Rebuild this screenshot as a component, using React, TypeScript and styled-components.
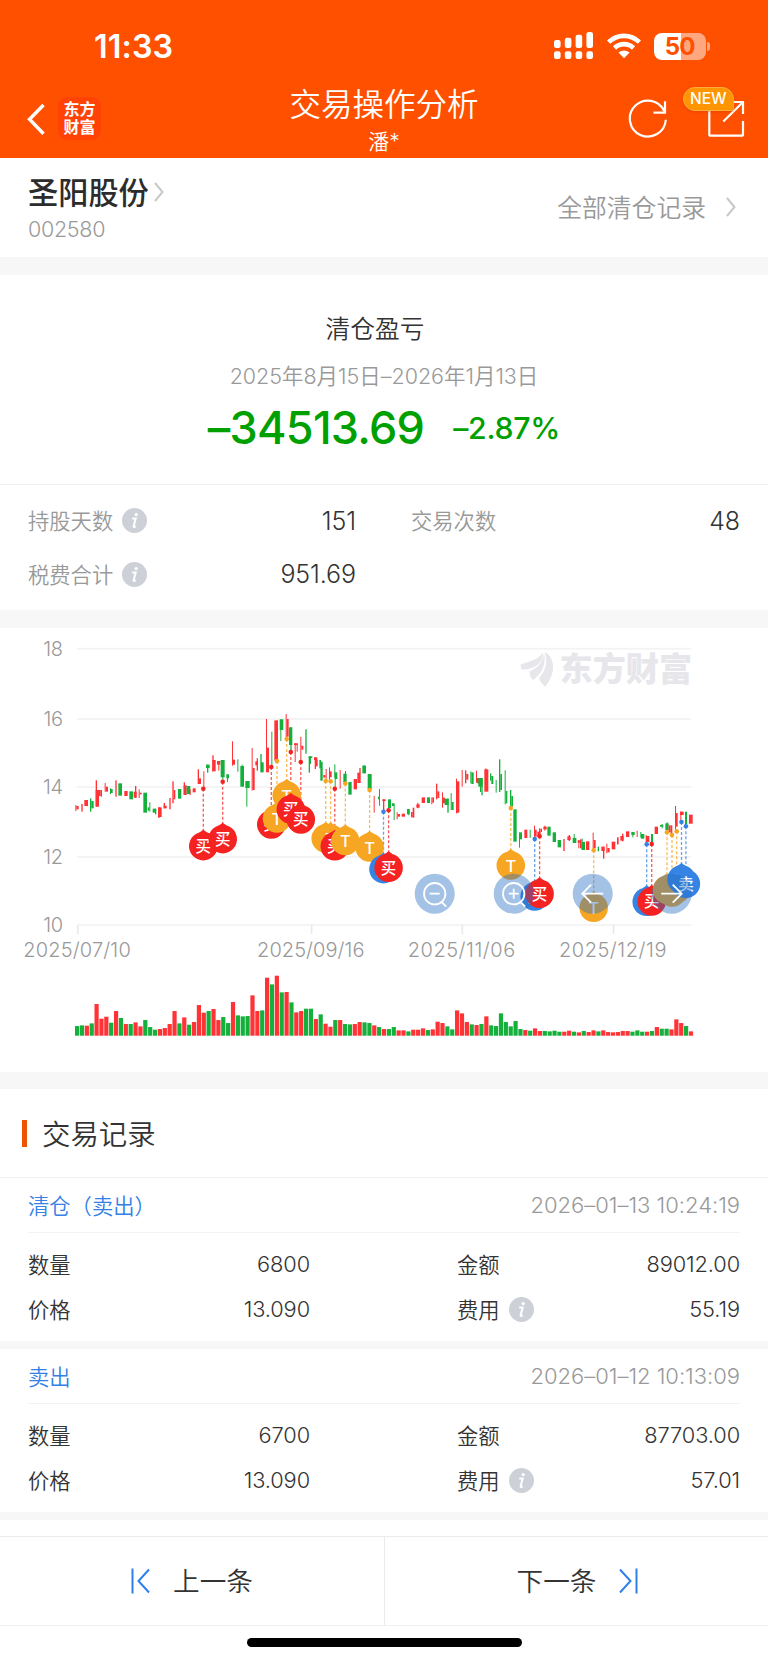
import React from "react";
import styled, { createGlobalStyle } from "styled-components";

const GlobalStyle = createGlobalStyle`
  * { box-sizing: border-box; }
  body {
    margin: 0;
    background: #fff;
    color: #333;
    font-family: Inter, "Noto Sans CJK SC", sans-serif;
    font-weight: 350;
  }
`;

const Page = styled.main`
  width: 768px;
  height: 1662px;
  display: flex;
  flex-direction: column;
  overflow: hidden;
  background: #fff;
`;

/* ---------- header ---------- */

const Header = styled.header`
  height: 158px;
  background: #ff5000;
  color: #fff;
  display: flex;
  flex-direction: column;
`;

const StatusBar = styled.div`
  height: 80px;
  padding: 12px 58px 0 94px;
  display: flex;
  align-items: center;
  justify-content: space-between;
`;

const Clock = styled.span`
  font-size: 32.3px;
  font-weight: 600;
  letter-spacing: 0.1px;
`;

const StatusIcons = styled.div`
  display: flex;
  align-items: center;
  gap: 13px;
`;

const Battery = styled.div`
  display: flex;
  align-items: center;
  gap: 1.5px;
`;

const BatteryCell = styled.div`
  width: 51.5px;
  height: 27px;
  border-radius: 8px;
  background: linear-gradient(90deg, #fff 51%, #ffa77f 51%);
  color: #ff5000;
  font-size: 24px;
  font-weight: 700;
  line-height: 27px;
  text-align: center;
  letter-spacing: -0.8px;
`;

const BatteryTip = styled.div`
  width: 3px;
  height: 9px;
  border-radius: 0 4px 4px 0;
  background: #ffa77f;
`;

const NavBar = styled.div`
  height: 78px;
  padding: 0 22px 0 27px;
  display: grid;
  grid-template-columns: 200px 1fr 205px;
`;

const NavLeft = styled.div`
  display: flex;
  align-items: flex-start;
  padding-top: 17px;
  gap: 13px;
`;

const AppBadge = styled.div`
  width: 43px;
  height: 43px;
  border-radius: 9px;
  background: #ff4206;
  font-size: 16px;
  font-weight: 700;
  line-height: 17.5px;
  padding-top: 4px;
  text-align: center;
`;

const NavTitle = styled.div`
  display: flex;
  flex-direction: column;
  align-items: center;
  white-space: nowrap;
  padding-top: 2.5px;
`;

const Title = styled.h1`
  margin: 0;
  font-size: 31.5px;
  font-weight: 350;
  line-height: 44px;
`;

const Subtitle = styled.span`
  font-size: 21px;
  line-height: 30px;
`;

const NavRight = styled.div`
  display: flex;
  justify-content: flex-end;
  align-items: flex-start;
  padding-top: 19px;
  gap: 40px;
`;

const ShareButton = styled.div`
  position: relative;
  height: 40px;
`;

const NewTag = styled.span`
  position: absolute;
  left: -24px;
  top: -12px;
  width: 50.5px;
  height: 23.5px;
  border: 1px solid #ffab3a;
  border-radius: 12px 12px 3px 12px;
  background: #ff9500;
  box-shadow: 0 1px 3px rgba(180, 50, 0, 0.3);
  font-size: 15.5px;
  font-weight: 500;
  line-height: 22px;
  text-align: center;
`;

/* ---------- shared ---------- */

const Gap = styled.div<{ $h: number }>`
  height: ${(p) => p.$h}px;
  flex: none;
  background: #f7f7f7;
`;

const Label = styled.span<{ $muted?: boolean }>`
  display: flex;
  align-items: center;
  gap: 9px;
  padding-bottom: 2px;
  font-size: 21.3px;
  color: ${(p) => (p.$muted ? "#999" : "#333")};

  svg {
    margin-top: 2px;
  }
`;

const Value = styled.span<{ $size?: number }>`
  font-size: ${(p) => p.$size ?? 21.8}px;
  letter-spacing: -0.1px;
  text-align: right;
  color: #333;
`;

/* ---------- stock ---------- */

const StockBar = styled.section`
  height: 99px;
  padding: 0 32px 0 28px;
  display: flex;
  justify-content: space-between;
`;

const StockName = styled.div`
  display: flex;
  align-items: center;
  gap: 5px;
  height: 44px;
  margin-top: 10.5px;
  font-size: 30.2px;
  font-weight: 500;
  color: #2c2c2c;

  svg {
    margin-top: 2px;
  }
`;

const StockCode = styled.div`
  margin-top: 1.5px;
  font-size: 21.5px;
  line-height: 30px;
  letter-spacing: -0.3px;
  color: #999;
`;

const AllRecords = styled.div`
  display: flex;
  align-items: center;
  gap: 20px;
  padding-bottom: 4px;
  font-size: 24.8px;
  color: #999;

  svg {
    margin-top: 3px;
  }
`;

/* ---------- summary ---------- */

const Summary = styled.section`
  height: 209px;
  display: flex;
  flex-direction: column;
  align-items: center;
  padding-top: 36px;
`;

const SummaryTitle = styled.div`
  margin-right: 18px;
  font-size: 24.7px;
  line-height: 36px;
`;

const Period = styled.div`
  margin-top: 13.5px;
  font-size: 21.5px;
  line-height: 30px;
  letter-spacing: -0.02px;
  color: #999;
`;

const Profit = styled.div`
  margin-top: 9px;
  height: 56px;
  display: flex;
  align-items: center;
  gap: 29px;
  color: #00a000;
  font-weight: 500;
`;

const Amount = styled.span`
  font-size: 45px;
  letter-spacing: -0.75px;
`;

const Percent = styled.span`
  font-size: 30.3px;
  letter-spacing: -0.3px;
`;

const Stats = styled.section`
  height: 126px;
  border-top: 1px solid #f1f1f1;
  padding: 9px 28px 0;
  display: grid;
  grid-template-columns: 328px 329px;
  grid-auto-rows: 53.5px;
  column-gap: 55px;
`;

const Stat = styled.div`
  display: flex;
  align-items: center;
  justify-content: space-between;
`;

const ChartPanel = styled.section`
  height: 443.5px;
  svg { display: block; }
`;

/* ---------- records ---------- */

const RecordsTitle = styled.h2`
  height: 89px;
  margin: 0;
  padding-left: 21.5px;
  padding-bottom: 2px;
  display: flex;
  align-items: center;
  gap: 15px;
  border-bottom: 1px solid #f3f3f3;
  font-size: 28.4px;
  font-weight: 350;

  &::before {
    content: "";
    width: 5.5px;
    height: 27px;
    margin-top: 2px;
    background: #eb5500;
  }
`;

const Record = styled.article`
  height: 162.5px;
  padding: 0 28px;
`;

const RecordHead = styled.div`
  height: 54.5px;
  border-bottom: 1px solid #f3f3f3;
  display: flex;
  align-items: center;
  justify-content: space-between;
`;

const RecordKind = styled.span`
  font-size: 21.3px;
  color: #3380e6;
`;

const RecordTime = styled.time`
  padding-top: 1px;
  font-size: 22px;
  letter-spacing: -0.02px;
  color: #999;
`;

const RecordGrid = styled.div`
  padding-top: 9px;
  display: grid;
  grid-template-columns: 282px 283px;
  grid-auto-rows: 45px;
  column-gap: 147px;
`;

/* ---------- footer ---------- */

const Pager = styled.nav`
  height: 90px;
  margin-top: 15.5px;
  border-top: 1px solid #ebebeb;
  border-bottom: 1px solid #f0f0f0;
  display: grid;
  grid-template-columns: 1fr 1fr;
`;

const PagerButton = styled.div`
  display: flex;
  align-items: center;
  justify-content: center;
  gap: 22px;
  padding-bottom: 2px;
  font-size: 26.6px;

  svg {
    margin-top: 2px;
  }

  & + & {
    border-left: 1px solid #ebebeb;
    padding-left: 2px;
  }
`;

const HomeBar = styled.div`
  width: 275px;
  height: 9px;
  margin: 12px auto 0;
  border-radius: 5px;
  background: #000;
`;

/* ---------- icons ---------- */

const Chevron = ({ w = 10, h = 20 }: { w?: number; h?: number }) => (
  <svg width={w} height={h} viewBox={`0 0 ${w} ${h}`} fill="none" stroke="#c8c8c8" strokeWidth="2">
    <path d={`M1 1L${w - 1.5} ${h / 2}L1 ${h - 1}`} />
  </svg>
);

const InfoIcon = () => (
  <svg width="25" height="25" viewBox="0 0 25 25">
    <circle cx="12.5" cy="12.5" r="12.5" fill="#cdd0d6" />
    <circle cx="14.2" cy="6.6" r="1.7" fill="#fff" />
    <path d="M10.2 10.6h3.5l-2.1 7.6q-.3 1.500 2.200 .1" fill="none" stroke="#fff" strokeWidth="2" />
  </svg>
);

const SignalIcon = () => (
  <svg width="40" height="28" viewBox="0 0 40 28" fill="#fff">
    {[8, 5.7, 2.7, 0].map((y, i) => (
      <g key={y}>
        <rect x={i * 10.8} y={y} width="6.6" height={16 - y} rx="2.2" />
        <rect x={i * 10.8} y="19.3" width="6.6" height="7.7" rx="2.2" />
      </g>
    ))}
  </svg>
);

const WifiIcon = () => (
  <svg width="34" height="26" viewBox="0 0 34 26" fill="none" stroke="#fff" strokeWidth="4.6">
    <path d="M1.6 9.2A22 22 0 0 1 32.4 9.2" />
    <path d="M7.5 15A13.6 13.6 0 0 1 26.5 15" />
    <path d="M11.4 19.6Q17 15.4 22.6 19.6L17 25.2Z" fill="#fff" stroke="none" />
  </svg>
);

/* ---------- chart ---------- */

const UP = "#ff3236";
const DOWN = "#15b03c";

// Candle segments: direction, left, top, right, bottom in thirds of a pixel
// relative to the origin of each run.
const runs: { ox: number; oy: number; data: string }[] = [
  {
    ox: 60,
    oy: 640,
    data: `R46,495,49,513 R49,498,56,508 R64,492,68,515 R73,480,84,498 G90,475,94,515 G94,483,101,505
R107,421,111,500 R107,450,117,500 R117,450,122,468 R122,450,126,470 R134,429,137,455 R137,440,144,455
G150,445,153,462 G153,447,158,459 R166,421,170,470 G175,430,186,467 R193,453,203,468 G208,454,219,478
R221,455,230,473 R225,438,229,474 R236,448,239,474 R239,458,245,463 G250,458,261,518 G268,487,271,515
G263,502,268,512 G278,506,288,518 G285,506,289,523 R294,502,305,531 R295,502,299,534 R311,489,315,505
R311,497,320,505 R328,474,332,508 R337,424,341,490 R341,450,346,478 G354,447,364,476 R371,427,375,465
R371,436,380,465 G380,438,391,462 R389,448,392,465 R398,445,407,457 R413,388,417,432 R417,415,423,432
R430,394,433,446 G438,374,449,384 G441,374,445,398 R457,346,461,394 R457,360,467,394 R471,363,481,374
R475,363,478,392 G482,360,494,412 G487,360,490,425 G499,403,507,415 G501,403,504,426 R516,304,519,377
R519,359,525,374 G532,358,535,395 G541,378,552,440 G545,374,548,440 G559,423,562,500 G556,423,569,444
R575,324,578,452 R578,384,584,450 R586,364,594,376 R590,355,594,392 G601,342,605,397 G603,367,611,397
R618,237,621,397 R621,323,627,397 G634,275,637,380 R643,241,654,362 G659,238,670,270 G661,238,664,303
R677,222,680,292 R680,237,686,290 G687,262,697,315 G691,262,695,335`,
  },
  {
    ox: 240,
    oy: 690,
    data: `R162,160,173,165 R164,160,167,216 R170,160,173,185 R181,140,184,215 R184,167,190,179 G196,118,200,191
G206,199,217,204 G206,199,210,248 G210,199,213,222 R222,202,232,210 R224,202,228,237 R228,210,233,229
G238,210,243,235 G241,215,248,272 R250,255,256,263 R257,237,260,270 R267,232,270,272 R270,244,275,262
G283,223,286,262 G284,247,292,267 G284,262,287,296 R299,240,302,296 G310,251,320,277 G315,243,318,278
G325,276,335,314 R341,267,351,298 R352,248,362,279 R358,234,362,250 G367,227,378,250 G371,225,374,250
G383,252,395,298 R401,318,404,368 G417,297,420,347 G414,320,418,328 R427,328,437,333 R429,328,433,362
G444,328,453,354 G461,340,464,390 G456,340,462,348 R470,367,473,388 R473,372,480,380 R485,371,495,380
G501,357,509,373 G505,357,508,376 R513,366,518,382 R518,353,523,383 R529,343,539,353 R532,338,535,355
R545,322,555,339 G561,322,570,339 R574,322,577,343 R577,322,582,338 R588,281,592,328 R592,304,598,324`,
  },
  {
    ox: 400,
    oy: 640,
    data: `R126,457,129,503 R129,473,135,490 G134,476,146,495 G142,476,146,518 G152,459,155,510 G155,486,161,510
R168,416,171,520 R171,424,178,518 R185,390,188,440 R195,391,199,430 R199,402,205,419 G211,394,214,430
G214,397,221,432 R228,392,231,428 R231,414,238,430 G235,414,248,440 G244,414,248,466 G240,414,243,456
R253,388,265,455 R256,385,259,390 G270,400,274,422 G274,408,280,432 G287,420,290,458 G297,358,301,456
G301,402,306,450 G314,391,317,493 G317,453,322,490 G330,450,334,500 G334,468,339,500 G340,508,350,605
G357,577,360,623 G360,577,366,598 R373,569,382,594 G389,569,392,594 R402,557,405,596 R405,569,410,590
R412,575,422,588 R417,565,420,588 R421,566,426,576 R430,560,440,568 R433,557,436,572 G442,560,452,587
G458,577,468,606 G473,600,483,622 R490,597,494,633 R502,589,512,600 R506,585,510,603 G518,594,529,609
G521,582,524,609 R533,601,543,608 R535,601,538,625 R540,598,545,625 G545,596,548,630 G545,606,555,630
R558,604,568,630 R578,578,581,630 R581,600,587,625 G593,620,597,634 R604,620,614,633 R609,620,613,656
R619,611,622,640 R622,624,629,637 R635,605,646,628 R651,592,656,613 R661,588,671,602 R666,581,670,604
R678,574,688,591 G694,576,704,585 G697,576,700,592 R710,572,713,591 G721,576,724,593 G723,582,733,596
R737,586,741,612 R741,588,748,606 G753,582,759,608 R764,560,774,582 G780,555,790,560 G785,552,788,565
G796,550,806,570 G800,547,803,577 R806,556,812,577 R812,556,817,584 R825,498,828,572 R828,519,833,560
R840,515,851,525 R841,515,844,545 G855,515,858,558 G858,515,861,552 R867,524,878,551`,
  },
];

const segments = runs.flatMap(({ ox, oy, data }) =>
  data.split(/\s+/).map((item) => {
    const [x1, y1, x2, y2] = item.slice(1).split(",").map(Number);
    return {
      x: ox + x1 / 3,
      y: oy + y1 / 3,
      w: (x2 - x1) / 3,
      h: (y2 - y1) / 3,
      fill: item[0] === "R" ? UP : DOWN,
    };
  })
);

// Daily volume: direction and height in thirds of a pixel.
const volumes = `G29 G31 R30 G37 R95 R51 R57 G39 R74 G53 R35 G35 R40 R28 G47 G26 G18 R20 R23 R35 R74 G37 R55 G33 R41 R92
R69 G74 R80 R47 G56 G38 R101 G61 G58 G59 R121 R74 G76 R174 G154 R180 G130 R131 G100 R70 R74 G81 G81 R50 G64 R36
R27 G47 R47 G35 G34 R35 R41 G40 G38 R31 G26 R20 G20 G26 R16 R16 G13 R18 R18 R22 G17 R19 R42 R38 G28 G19 R76 R67
R41 G34 R32 G35 R58 G31 G29 G67 G41 G28 G44 G20 R17 G15 R22 R14 G14 G13 G15 G12 R12 R15 G12 R10 G14 R11 R16 G13
R16 R11 R10 R11 R14 R14 G12 G16 G12 R12 G14 R26 G21 G21 R19 R49 R38 G29 R13`.split(/\s+/);

type Kind = "buy" | "sell" | "both";
const pinStyle: Record<Kind, { color: string; text: string }> = {
  buy: { color: "#f52222", text: "买" },
  sell: { color: "#3583e2", text: "卖" },
  both: { color: "#f6a623", text: "T" },
};

const trades: [Kind, number, number, number?][] = [
  ["buy", 203.3, 788.7],
  ["buy", 222.7, 781.7],
  ["buy", 271.3, 767],
  ["both", 277, 761],
  ["both", 286.7, 739, 795.5],
  ["buy", 290.8, 752],
  ["buy", 300.8, 762],
  ["both", 325.7, 781],
  ["both", 330.6, 781.2],
  ["buy", 334.8, 788.8],
  ["both", 345.3, 783.5],
  ["both", 369.6, 790],
  ["sell", 383.5, 811.7],
  ["buy", 388.6, 810.3],
  ["both", 510.8, 808],
  ["sell", 534.7, 839],
  ["buy", 539.6, 836.3],
  ["both", 593.7, 850.3],
  ["sell", 646.7, 844.3],
  ["buy", 651.7, 844],
  ["both", 667, 832.3],
  ["both", 672, 835],
  ["both", 676.7, 831.3],
  ["sell", 681.5, 822],
  ["sell", 685.9, 826.3],
];

const Pin = ({ kind, x, y }: { kind: Kind; x: number; y: number }) => {
  const { color, text } = pinStyle[kind];
  return (
    <g transform={`translate(${x} ${y})`}>
      <path d="M0 -16.5Q3 -13.8 7 -12.5A14.300 14.300 0 1 1 -7 -12.5Q-3 -13.8 0 -16.5Z" fill={color} />
      <text
        y={text === "T" ? 6 : 5.8}
        fontSize={text === "T" ? 16.5 : 15.5}
        fontWeight="500"
        fill="#fff"
        textAnchor="middle"
      >
        {text}
      </text>
    </g>
  );
};

const controls = [
  { x: 434.7, d: "M-5 0H5M7 8.5L11.5 13M10.7 0A10.7 10.7 0 1 1 -10.7 0A10.7 10.7 0 1 1 10.7 0" },
  { x: 513.7, d: "M-5 0H5M0 -5V5M7 8.5L11.5 13M10.7 0A10.7 10.7 0 1 1 -10.7 0A10.7 10.7 0 1 1 10.7 0" },
  { x: 592.7, d: "M10.5 0H-10.5M-1.5 -9L-10.5 0L-1.5 9" },
  { x: 671.7, d: "M-10.5 0H10M1 -9L10 0L1 9" },
];

const gridLines: [number, number][] = [
  [18, 648.7],
  [16, 719],
  [14, 787],
  [12, 857],
  [10, 925],
];

const dateTicks: [string, number][] = [
  ["2025/07/10", 78],
  ["2025/09/16", 311.8],
  ["2025/11/06", 462.5],
  ["2025/12/19", 613.7],
];

const Chart = () => (
  <svg width="768" height="443.5" viewBox="0 628 768 443.5">
    {gridLines.map(([v, y]) => (
      <g key={v}>
        <rect x="77" y={y - 0.9} width="614" height="1.8" fill="#f3f3f4" />
        <text x="62.8" y={y + 7} fontSize="20" letterSpacing="-0.3" fill="#999" textAnchor="end">
          {v}
        </text>
      </g>
    ))}
    {dateTicks.map(([label, x]) => (
      <g key={label}>
        <rect x={x - 1} y="925" width="1.6" height="9" fill="#e9e9e9" />
        <text x={x - 1} y="957" fontSize="20" textLength="107.5" fill="#999" textAnchor="middle">
          {label}
        </text>
      </g>
    ))}

    <g fill="#e6e6eb">
      <path d="M520.7 664.5C530 661 538 660 543 652.5C543.5 662 536 669.5 521.5 669.5Q520.5 667 520.7 664.5Z" />
      <path d="M529.5 671.5C538 668 543.500 661 544 653C547 665 540 676 532.5 680Q529.5 676 529.5 671.5Z" />
      <path d="M545 652C552 656 554 664 552.7 671C551.5 678 548 683 545 686.7C542 684 540 681 539 678C545.500 671 548 663 545 652Z" />
      <text x="559.5" y="680.5" fontSize="33.2" fontWeight="900">
        东方财富
      </text>
    </g>

    {segments.map((s, i) => (
      <rect key={i} x={s.x} y={s.y} width={s.w} height={s.h} fill={s.fill} />
    ))}

    {volumes.map((v, i) => {
      const h = Number(v.slice(1)) / 3;
      return (
        <rect
          key={i}
          x={75 + i * 4.872}
          y={1035.7 - h}
          width="4.2"
          height={h}
          fill={v[0] === "R" ? UP : DOWN}
        />
      );
    })}

    {trades.map(([kind, x, y], i) => (
      <g key={i}>
        <line
          x1={x}
          x2={x}
          y1={y}
          y2={y + 42}
          stroke={pinStyle[kind].color}
          strokeOpacity="0.75"
          strokeWidth="1.3"
          strokeDasharray="3 2"
        />
        <circle cx={x} cy={y} r="2.3" fill={pinStyle[kind].color} />
      </g>
    ))}
    {trades.map(([kind, x, y, pinY], i) => (
      <Pin key={i} kind={kind} x={x} y={pinY ?? y + 57.5} />
    ))}

    {controls.map(({ x, d }) => (
      <g key={x} transform={`translate(${x} 893.7)`}>
        <circle r="20" fill="#266ec3" fillOpacity="0.42" />
        <path d={d} fill="none" stroke="#fff" strokeWidth="1.8" />
      </g>
    ))}
  </svg>
);

/* ---------- page ---------- */

const records = [
  {
    kind: "清仓（卖出）",
    time: "2026–01–13 10:24:19",
    qty: "6800",
    amount: "89012.00",
    price: "13.090",
    fee: "55.19",
  },
  {
    kind: "卖出",
    time: "2026–01–12 10:13:09",
    qty: "6700",
    amount: "87703.00",
    price: "13.090",
    fee: "57.01",
  },
];

export default function App() {
  return (
    <Page>
      <GlobalStyle />
      <Header>
        <StatusBar>
          <Clock>11:33</Clock>
          <StatusIcons>
            <SignalIcon />
            <WifiIcon />
            <Battery>
              <BatteryCell>50</BatteryCell>
              <BatteryTip />
            </Battery>
          </StatusIcons>
        </StatusBar>
        <NavBar>
          <NavLeft>
            <svg width="18" height="44" viewBox="0 0 18 44" fill="none" stroke="#fff" strokeWidth="3.4">
              <path d="M16.500 8L2.500 22.300L16.500 36.800" />
            </svg>
            <AppBadge>
              东方
              <br />
              财富
            </AppBadge>
          </NavLeft>
          <NavTitle>
            <Title>交易操作分析</Title>
            <Subtitle>潘*</Subtitle>
          </NavTitle>
          <NavRight>
            <svg width="39" height="40" viewBox="627.5 98.7 39 40" fill="none" stroke="#fff" strokeWidth="2.2">
              <path d="M663.800 111A18 18 0 1 0 665.300 119.500" />
              <path d="M664.500 101V112.300H653" />
            </svg>
            <ShareButton>
              <svg width="39" height="40" viewBox="707 99 39 40" fill="none" stroke="#fff" strokeWidth="2.2">
                <path d="M709.300 108V134.200Q709.300 135.700 710.800 135.700H741.500Q743 135.700 743 134.200V121" />
                <path d="M732 102H743V114M743 102L723.300 121.500" />
              </svg>
              <NewTag>NEW</NewTag>
            </ShareButton>
          </NavRight>
        </NavBar>
      </Header>

      <StockBar>
        <div>
          <StockName>
            圣阳股份
            <Chevron />
          </StockName>
          <StockCode>002580</StockCode>
        </div>
        <AllRecords>
          全部清仓记录
          <Chevron />
        </AllRecords>
      </StockBar>
      <Gap $h={18} />

      <Summary>
        <SummaryTitle>清仓盈亏</SummaryTitle>
        <Period>2025年8月15日–2026年1月13日</Period>
        <Profit>
          <Amount>–34513.69</Amount>
          <Percent>–2.87%</Percent>
        </Profit>
      </Summary>
      <Stats>
        <Stat>
          <Label $muted>
            持股天数 <InfoIcon />
          </Label>
          <Value $size={25}>151</Value>
        </Stat>
        <Stat>
          <Label $muted>交易次数</Label>
          <Value $size={25}>48</Value>
        </Stat>
        <Stat>
          <Label $muted>
            税费合计 <InfoIcon />
          </Label>
          <Value $size={25}>951.69</Value>
        </Stat>
      </Stats>
      <Gap $h={18} />

      <ChartPanel>
        <Chart />
      </ChartPanel>
      <Gap $h={17.5} />

      <RecordsTitle>交易记录</RecordsTitle>
      {records.map((r) => (
        <React.Fragment key={r.time}>
          <Record>
            <RecordHead>
              <RecordKind>{r.kind}</RecordKind>
              <RecordTime>{r.time}</RecordTime>
            </RecordHead>
            <RecordGrid>
              <Stat>
                <Label>数量</Label>
                <Value>{r.qty}</Value>
              </Stat>
              <Stat>
                <Label>金额</Label>
                <Value>{r.amount}</Value>
              </Stat>
              <Stat>
                <Label>价格</Label>
                <Value>{r.price}</Value>
              </Stat>
              <Stat>
                <Label>
                  费用 <InfoIcon />
                </Label>
                <Value>{r.fee}</Value>
              </Stat>
            </RecordGrid>
          </Record>
          <Gap $h={8.5} />
        </React.Fragment>
      ))}

      <Pager>
        <PagerButton>
          <svg width="20" height="26" viewBox="0 0 20 26" fill="none" stroke="#2f80ed" strokeWidth="2">
            <path d="M1.500 .5V25.500M18 1.500L7.500 13L18 24.500" />
          </svg>
          上一条
        </PagerButton>
        <PagerButton>
          下一条
          <svg width="20" height="26" viewBox="0 0 20 26" fill="none" stroke="#2f80ed" strokeWidth="2">
            <path d="M18.500 .5V25.500M2 1.500L12.500 13L2 24.500" />
          </svg>
        </PagerButton>
      </Pager>
      <HomeBar />
    </Page>
  );
}
